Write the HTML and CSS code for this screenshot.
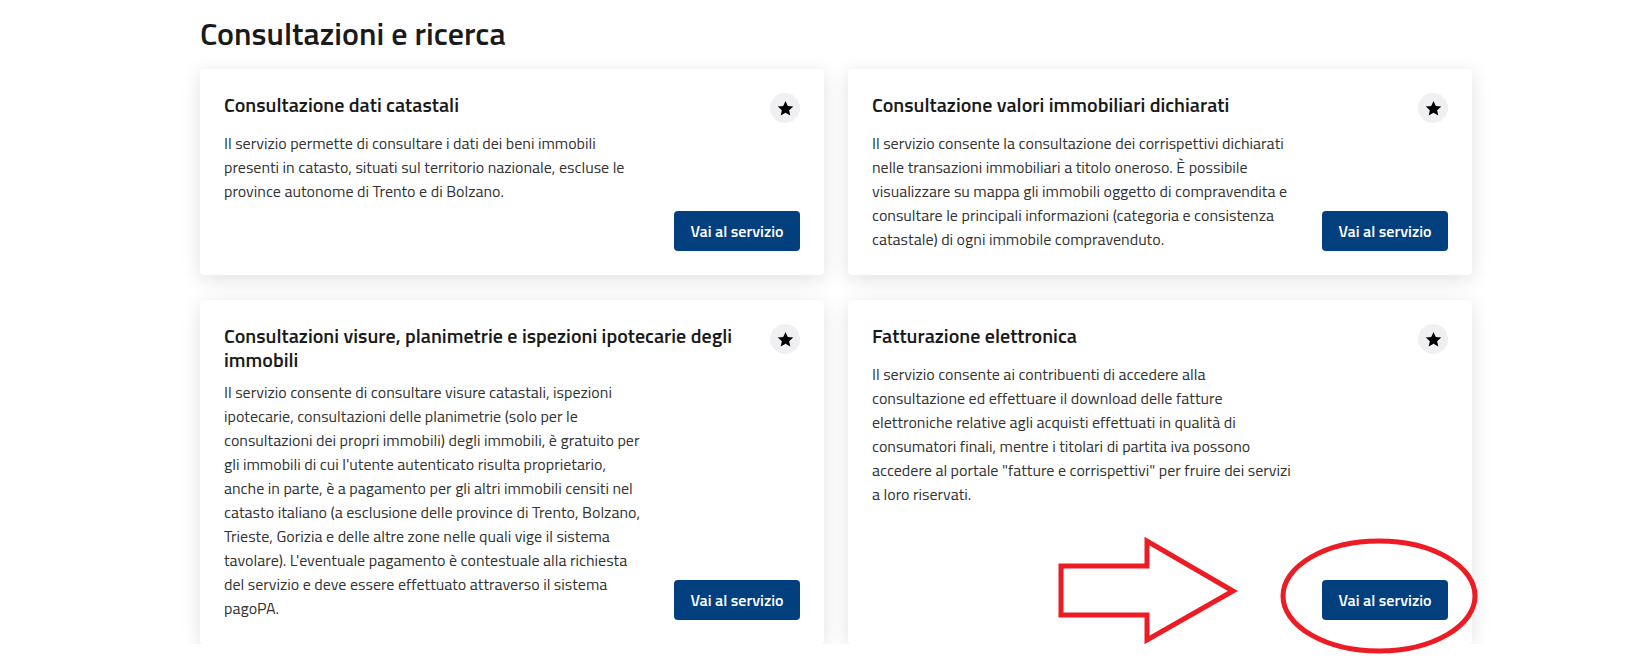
FILE: index.html
```html
<!DOCTYPE html>
<html lang="it">
<head>
    <meta charset="UTF-8">
    <meta name="viewport" content="width=device-width, initial-scale=1.0">
    <title>Consultazioni e ricerca</title>
    <link rel="stylesheet" href="styles.css">
</head>
<body>
    <div class="container">
        <h2 class="section-title">Consultazioni e ricerca</h2>

        <div class="card-grid">
            <!-- Card 1 -->
            <div class="service-card">
                <div class="card-head">
                    <h3>Consultazione dati catastali</h3>
                    <button class="fav" title="Aggiungi ai preferiti">
                        <svg viewBox="0 0 24 24"><path d="M12 2.5l2.9 6.3 6.9.7-5.2 4.6 1.5 6.8L12 17.4l-6.1 3.5 1.5-6.8-5.2-4.6 6.9-.7z"/></svg>
                    </button>
                </div>
                <div class="card-body">
                    <p>Il servizio permette di consultare i dati dei beni immobili presenti in catasto, situati sul territorio nazionale, escluse le province autonome di Trento e di Bolzano.</p>
                    <a class="btn-service" href="#">Vai al servizio</a>
                </div>
            </div>

            <!-- Card 2 -->
            <div class="service-card">
                <div class="card-head">
                    <h3>Consultazione valori immobiliari dichiarati</h3>
                    <button class="fav" title="Aggiungi ai preferiti">
                        <svg viewBox="0 0 24 24"><path d="M12 2.5l2.9 6.3 6.9.7-5.2 4.6 1.5 6.8L12 17.4l-6.1 3.5 1.5-6.8-5.2-4.6 6.9-.7z"/></svg>
                    </button>
                </div>
                <div class="card-body">
                    <p>Il servizio consente la consultazione dei corrispettivi dichiarati nelle transazioni immobiliari a titolo oneroso. È possibile visualizzare su mappa gli immobili oggetto di compravendita e consultare le principali informazioni (categoria e consistenza catastale) di ogni immobile compravenduto.</p>
                    <a class="btn-service" href="#">Vai al servizio</a>
                </div>
            </div>

            <!-- Card 3 -->
            <div class="service-card">
                <div class="card-head">
                    <h3>Consultazioni visure, planimetrie e ispezioni ipotecarie degli immobili</h3>
                    <button class="fav" title="Aggiungi ai preferiti">
                        <svg viewBox="0 0 24 24"><path d="M12 2.5l2.9 6.3 6.9.7-5.2 4.6 1.5 6.8L12 17.4l-6.1 3.5 1.5-6.8-5.2-4.6 6.9-.7z"/></svg>
                    </button>
                </div>
                <div class="card-body">
                    <p>Il servizio consente di consultare visure catastali, ispezioni ipotecarie, consultazioni delle planimetrie (solo per le consultazioni dei propri immobili) degli immobili, è gratuito per gli immobili di cui l'utente autenticato risulta proprietario, anche in parte, è a pagamento per gli altri immobili censiti nel catasto italiano (a esclusione delle province di Trento, Bolzano, Trieste, Gorizia e delle altre zone nelle quali vige il sistema tavolare). L'eventuale pagamento è contestuale alla richiesta del servizio e deve essere effettuato attraverso il sistema pagoPA.</p>
                    <a class="btn-service" href="#">Vai al servizio</a>
                </div>
            </div>

            <!-- Card 4 -->
            <div class="service-card">
                <div class="card-head">
                    <h3>Fatturazione elettronica</h3>
                    <button class="fav" title="Aggiungi ai preferiti">
                        <svg viewBox="0 0 24 24"><path d="M12 2.5l2.9 6.3 6.9.7-5.2 4.6 1.5 6.8L12 17.4l-6.1 3.5 1.5-6.8-5.2-4.6 6.9-.7z"/></svg>
                    </button>
                </div>
                <div class="card-body">
                    <p>Il servizio consente ai contribuenti di accedere alla consultazione ed effettuare il download delle fatture elettroniche relative agli acquisti effettuati in qualità di consumatori finali, mentre i titolari di partita iva possono accedere al portale "fatture e corrispettivi" per fruire dei servizi a loro riservati.</p>
                    <a class="btn-service" href="#">Vai al servizio</a>
                </div>
            </div>
        </div>
    </div>

    <!-- Annotation drawn over the screenshot -->
    <svg class="annotation" viewBox="0 0 1641 663" width="1641" height="663">
        <polygon points="1061,566 1147,566 1147,541 1233,591 1147,640 1147,615 1061,615" />
        <ellipse cx="1379" cy="596" rx="96" ry="55" />
    </svg>
</body>
</html>
```
FILE: styles.css
```css
body {
    margin: 0;
    font-family: "Titillium Web", Lato, sans-serif;
    color: #333;
    background-color: #fff;
}
.container {
    width: 1272px;
    margin-left: 200px;
    padding-top: 13px;
}
.section-title {
    margin: 0 0 16px;
    font-size: 32px;
    font-weight: 600;
    line-height: 40px;
    color: #1a1a1a;
}
.card-grid {
    display: grid;
    grid-template-columns: 1fr 1fr;
    gap: 25px 24px;
}
.service-card {
    display: flex;
    flex-direction: column;
    padding: 24px;
    background-color: #fff;
    border-radius: 4px;
    box-shadow: 0 4px 20px rgba(0, 0, 0, 0.12);
}
.card-head {
    display: flex;
    justify-content: space-between;
    align-items: flex-start;
    gap: 24px;
}
.card-head h3 {
    margin: 0;
    font-size: 20px;
    font-weight: 600;
    line-height: 24px;
    color: #1a1a1a;
}
.fav {
    flex: none;
    display: flex;
    align-items: center;
    justify-content: center;
    width: 30px;
    height: 30px;
    padding: 0;
    border: none;
    border-radius: 50%;
    background-color: #f0f0f2;
}
.fav svg {
    width: 19px;
    height: 19px;
    fill: #000;
}
.card-body {
    flex: 1;
    display: flex;
    gap: 24px;
    margin-top: 8px;
}
.card-body p {
    width: 421px;
    margin: 0;
    font-size: 16px;
    line-height: 24px;
    color: #333;
}
.btn-service {
    align-self: flex-end;
    width: 126px;
    height: 40px;
    margin-left: auto;
    display: flex;
    align-items: center;
    justify-content: center;
    border-radius: 4px;
    background-color: #023f7e;
    color: #fff;
    font-size: 16px;
    font-weight: 600;
    text-decoration: none;
}
.annotation {
    position: absolute;
    top: 0;
    left: 0;
    pointer-events: none;
    fill: none;
    stroke: #ed1c24;
    stroke-width: 5;
}
```
